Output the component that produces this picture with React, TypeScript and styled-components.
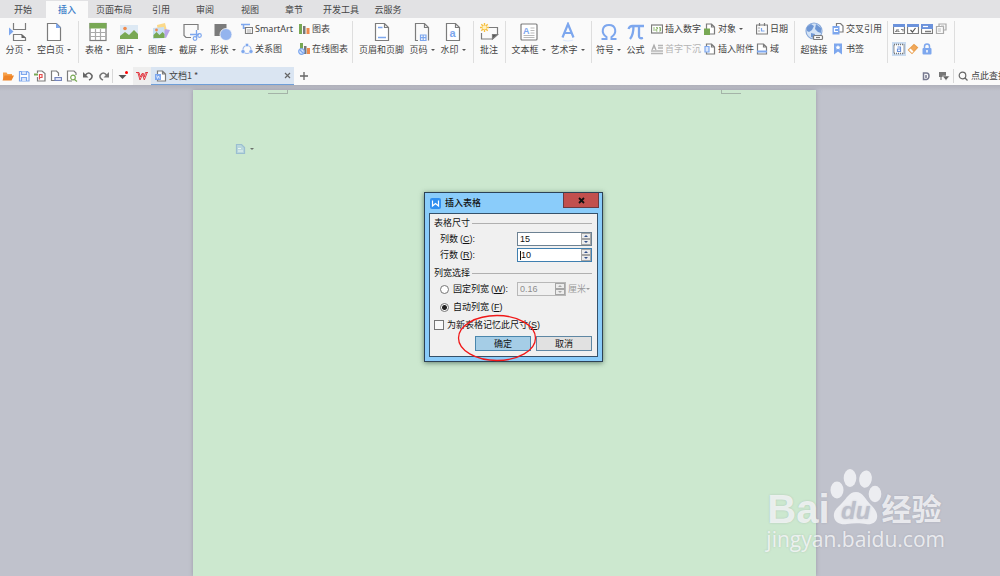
import React, { useState } from 'react';
import styled, { createGlobalStyle } from 'styled-components';

const GlobalStyle = createGlobalStyle`
  * { box-sizing: border-box; }
  body {
    margin: 0;
    background: #c0c2cc;
    color: #444;
    font-family: "Noto Sans CJK SC", sans-serif;
    font-size: 9px;
    line-height: 12px;
    overflow-x: hidden;
  }
  button, input, select {
    font: inherit;
    color: inherit;
    margin: 0;
    padding: 0;
    border: 0;
    background: none;
  }
  svg { flex: none; }
`;

const blue = '#7da7ee';
const gray = '#7c7c7c';
const green = '#78a854';
const orange = '#ef8a4c';

const Shell = styled.div`
  position: relative;
  min-height: 100vh;
  display: flex;
  flex-direction: column;
  overflow: hidden;
`;

const TabBar = styled.nav`
  display: flex;
  height: 18px;
  padding-top: 1px;
  background: #e2e2e4;
`;

const MenuTab = styled.button<{ $width: number; $active?: boolean }>`
  flex: none;
  width: ${(p) => p.$width}px;
  height: 17px;
  white-space: nowrap;
  color: ${(p) => (p.$active ? '#3f7fc9' : '#444')};
  font-weight: ${(p) => (p.$active ? 500 : 400)};
  background: ${(p) => (p.$active ? '#fafafa' : 'transparent')};
`;

const Ribbon = styled.div`
  display: flex;
  height: 49px;
  padding-left: 2px;
  background: #fafafa;
  overflow: hidden;
`;

const Divider = styled.div`
  flex: none;
  width: 1px;
  height: 42px;
  margin: 3px 3px 0 4px;
  background: #dedede;
`;

const LargeTool = styled.button<{ $width: number }>`
  flex: none;
  width: ${(p) => p.$width}px;
  height: 40px;
  padding-top: 4px;
  display: flex;
  flex-direction: column;
  align-items: center;
  gap: 2px;
  white-space: nowrap;
`;

const Label = styled.span`
  display: flex;
  align-items: center;
  gap: 3px;
  white-space: nowrap;
`;

const Arrow = styled.i`
  width: 0;
  height: 0;
  border: 2px solid transparent;
  border-top: 2px solid #555;
  border-bottom: 0;
`;

const ToolColumn = styled.div<{ $width: number }>`
  flex: none;
  width: ${(p) => p.$width}px;
  padding: 1px 0 0 2px;
  display: flex;
  flex-direction: column;
`;

const SmallTool = styled.button`
  height: 20px;
  display: flex;
  align-items: center;
  gap: 2px;
  white-space: nowrap;
  &:disabled { color: #b4b4b4; }
`;

const Latin = styled.span`
  font-family: "Noto Sans", sans-serif;
`;

const IconGrid = styled.div`
  flex: none;
  display: grid;
  grid-template-columns: repeat(4, 14px);
  grid-auto-rows: 20px;
  padding: 1px 2px 0 1px;
`;

const GridButton = styled.button<{ $on?: boolean }>`
  width: 14px;
  height: 14px;
  align-self: center;
  display: grid;
  place-items: center;
  background: ${(p) => (p.$on ? '#c9dbf0' : 'transparent')};
`;

const QuickBar = styled.div`
  display: flex;
  align-items: center;
  height: 18px;
  background: #fafafa;
`;

const QuickButton = styled.button<{ $width?: number; $shade?: boolean }>`
  flex: none;
  width: ${(p) => p.$width ?? 16}px;
  height: 18px;
  display: grid;
  place-items: center;
  background: ${(p) => (p.$shade ? '#eeeeee' : 'transparent')};
`;

const ThinRule = styled.div`
  flex: none;
  width: 1px;
  height: 14px;
  background: #d8d8d8;
`;

const DocTab = styled.div`
  flex: none;
  width: 143px;
  height: 18px;
  padding: 0 3px 0 4px;
  display: flex;
  align-items: center;
  gap: 2px;
  background: #dae5f2;
  border-bottom: 1px solid #6f9fd8;
`;

const DocTitle = styled.span`
  flex: 1;
`;

const QuickRight = styled.div`
  flex: none;
  margin-left: auto;
  display: flex;
  align-items: center;
`;

const SearchButton = styled.button`
  display: flex;
  align-items: center;
  justify-content: flex-start;
  gap: 3px;
  width: 46px;
  padding-left: 4px;
  white-space: nowrap;
  overflow: hidden;
`;

const Workspace = styled.main`
  flex: 1;
  display: flex;
  justify-content: center;
  padding: 5px 0 0 9px;
  background: linear-gradient(#b0b1bb, #c0c2cc 6px);
`;

const Paper = styled.article`
  position: relative;
  width: 623px;
  display: flex;
  flex-direction: column;
  background: #cce8cf;
  box-shadow: 0 0 4px #9a9ba8;
`;

const CropMarks = styled.div`
  display: flex;
  justify-content: space-between;
  padding: 0 75px;
`;

const CropMark = styled.i<{ $side: 'left' | 'right' }>`
  width: 20px;
  height: 4px;
  border-bottom: 1px solid #a4b3a8;
  border-${(p) => (p.$side === 'left' ? 'right' : 'left')}: 1px solid #a4b3a8;
`;

const PasteOptions = styled.button`
  align-self: flex-start;
  margin: 49px 0 0 42px;
  display: flex;
  align-items: center;
  gap: 4px;
  opacity: 0.8;
`;

const Dialog = styled.form`
  position: absolute;
  top: 102px;
  left: 231px;
  width: 179px;
  border: 1px solid #2c4256;
  background: #8accfa;
  box-shadow: 0 1px 5px rgba(30, 60, 50, 0.6);
  padding: 0 4px 4px;
  color: #111;
`;

const TitleBar = styled.header`
  display: flex;
  align-items: center;
  height: 20px;
  gap: 4px;
`;

const Title = styled.h1`
  flex: 1;
  margin: 0;
  font-size: 9px;
  font-weight: 500;
  line-height: 12px;
`;

const CloseButton = styled.button`
  align-self: flex-start;
  width: 36px;
  height: 15px;
  margin-right: -1px;
  background: #c2504e;
  border: 1px solid #6b3a42;
  border-top: 0;
  display: grid;
  place-items: center;
`;

const DialogBody = styled.div`
  border: 1px solid #35516a;
  background: #f0f0f0;
  padding: 3px 5px 5px 4px;
`;

const SectionTitle = styled.h2`
  display: flex;
  align-items: center;
  gap: 2px;
  margin: 0 0 2px;
  font-size: 9px;
  font-weight: 400;
  line-height: 12px;
  &::after {
    content: "";
    flex: 1;
    height: 1px;
    background: #b0b0b0;
  }
`;

const FieldGroup = styled.div`
  margin-bottom: 4px;
`;

const Field = styled.div<{ $indent?: boolean }>`
  display: flex;
  align-items: center;
  height: 16px;
  padding-left: ${(p) => (p.$indent ? 6 : 0)}px;
`;

const ChoiceRow = styled(Field)`
  margin-bottom: 2px;
`;

const FieldLabel = styled.label`
  flex: 1;
  white-space: nowrap;
`;

const Key = styled.span`
  font-family: "Liberation Sans", sans-serif;
`;

const Spin = styled.span<{ $width: number; $focus?: boolean; $off?: boolean }>`
  display: flex;
  width: ${(p) => p.$width}px;
  height: 14px;
  padding: 0 0 0 2px;
  align-items: center;
  background: ${(p) => (p.$off ? '#f0f0f0' : '#fff')};
  border: 1px solid ${(p) => (p.$off ? '#b8b8b8' : p.$focus ? '#3f7fb0' : '#6d8293')};
  color: ${(p) => (p.$off ? '#8e8e8e' : '#111')};
`;

const SpinInput = styled.input`
  flex: 1;
  min-width: 0;
  height: 12px;
  outline: none;
  font-family: "Liberation Sans", sans-serif;
  font-size: 9px;
  line-height: 12px;
`;

const TextCursor = styled.i`
  width: 1px;
  height: 9px;
  background: #111;
`;

const SpinButtons = styled.span<{ $off?: boolean }>`
  display: flex;
  flex-direction: column;
  width: 10px;
  height: 12px;
  color: ${(p) => (p.$off ? '#a8a8a8' : '#33508a')};
`;

const SpinButton = styled.button`
  flex: 1;
  display: grid;
  place-items: center;
  background: #ececec;
  border: 1px solid #a5a5a5;
`;

const UnitSelect = styled.select`
  appearance: none;
  width: 18px;
  margin-left: 2px;
  color: #9a9a9a;
  opacity: 1;
`;

const UnitArrow = styled(Arrow)`
  border-top-color: #9a9a9a;
  margin-right: 2px;
`;

const Radio = styled.input`
  appearance: none;
  width: 9px;
  height: 9px;
  margin: 0 4px 0 0;
  border: 1px solid #767676;
  border-radius: 50%;
  background: #fff;
  &:checked { background: radial-gradient(circle, #222 0 2px, #fff 3px); }
`;

const Check = styled.input`
  appearance: none;
  width: 10px;
  height: 10px;
  margin: 0 3px 0 0;
  border: 1px solid #767676;
  background: #fafafa;
  &:checked { background: #4b7fb8; }
`;

const Actions = styled.div`
  display: flex;
  justify-content: flex-end;
  gap: 5px;
  padding-top: 1px;
`;

const ActionButton = styled.button<{ $primary?: boolean }>`
  width: 56px;
  height: 15px;
  line-height: 12px;
  color: #111;
  background: ${(p) => (p.$primary ? '#a5cde6' : '#e1e1e1')};
  border: 1px solid ${(p) => (p.$primary ? '#4a86ac' : '#5f87a3')};
`;

const Highlight = styled.svg`
  position: absolute;
  left: 32px;
  top: 121px;
  pointer-events: none;
`;

const Watermark = styled.footer`
  position: absolute;
  right: 55px;
  bottom: 24px;
  color: rgba(250, 250, 252, 0.8);
  text-shadow: 0 0 2px rgba(110, 115, 130, 0.3);
  pointer-events: none;
`;

const WatermarkRow = styled.div`
  display: flex;
  align-items: flex-end;
  padding-left: 1px;
`;

const Brand = styled.span`
  font: 700 40px/34px "Liberation Sans", sans-serif;
`;

const BrandCn = styled.span`
  font: 700 30px/32px "Liberation Sans", "Noto Sans CJK SC", sans-serif;
`;

const Site = styled.div`
  font: 400 21px/26px "Open Sans", sans-serif;
`;

type IconProps = { w?: number; h?: number; children: React.ReactNode };

const Icon = ({ w = 20, h = 20, children }: IconProps) => (
  <svg width={w} height={h} viewBox={`0 0 ${w} ${h}`} fill="none" stroke={gray} strokeWidth="1.2" aria-hidden="true">
    {children}
  </svg>
);

const Small = ({ children }: { children: React.ReactNode }) => <Icon w={12} h={12}>{children}</Icon>;

const sheet = 'M3.500 1.500h9l4 4v13h-13zM12.500 1.500v4h4';
const miniSheet = 'M2.500 1h5l3 3v7h-8zM7.500 1v3h3';

const icons = {
  pageBreak: <Icon><path d="M5.500 1v6.500h12V1M5.500 19v-6.500h8l4 3.500v2.500h-12" /><path d="M13.500 12l4.500 4h-4.500z" fill="#666" stroke="none" /><path d="M1 5.500l4.500 4L1 13.500z" fill={blue} stroke="none" /></Icon>,
  blankPage: <Icon><path d="M3.500 1.500h9l4 4v13h-13z" fill="#fff" /><path d="M12 1l5 5h-5z" fill={blue} stroke="none" /></Icon>,
  table: <Icon><rect x="2" y="1.500" width="16" height="17" fill="#fff" /><path d="M2 10.500h16M2 14.500h16M7.500 7v11M12.500 7v11" stroke="#aaa" /><path d="M1.500 1h17v5.500h-17z" fill={green} stroke="none" /></Icon>,
  picture: <Icon><path d="M1 3h18v14H1z" fill="#dde9f4" stroke="none" /><path d="M1 17v-3l5-4 4 3 5-5 4 4v5z" fill={green} stroke="none" /><circle cx="6" cy="6.500" r="1.800" fill={orange} stroke="none" /></Icon>,
  gallery: <Icon><path d="M6 3l8-2 2 8-9 1z" fill="#fbd98a" stroke="none" /><path d="M14 7l5 1-4 8-4-1z" fill="#b9a7e8" stroke="none" /><path d="M2 6l11-1 1 11-12 1z" fill="#c9e0f4" stroke="none" /><path d="M2.500 16v-3l3-3 3 3 3-3 2 2v4z" fill={green} stroke="none" /><circle cx="5.500" cy="8" r="1.400" fill={orange} stroke="none" /></Icon>,
  screenshot: <Icon><path d="M9 15.500H4l-2-2V2.500h14V8" /><path d="M14.500 8v8M8 12.500h9" stroke={blue} strokeWidth="1.300" /><circle cx="13" cy="16.500" r="1.800" stroke={blue} /><circle cx="17.500" cy="13.500" r="1.800" stroke={blue} /></Icon>,
  shapes: <Icon><path d="M1.500 2h12v12h-12z" fill="#7b7b7b" stroke="none" /><circle cx="13" cy="12.500" r="6" fill="#94b4ee" stroke="#fafafa" strokeWidth=".8" /></Icon>,
  smartArt: <Small><path d="M0 1.500h9M2 5h3M2.500 2v4" stroke={blue} strokeWidth="1.500" /><path d="M4.500 4.500h7v6h-7z" fill="#fff" /><path d="M6 7h4M6 9h4" stroke="#aaa" /></Small>,
  relation: <Small><circle cx="6" cy="6.500" r="4" stroke="#9bb8ee" /><circle cx="6" cy="2" r="1.700" fill={blue} stroke="#fafafa" strokeWidth=".5" /><circle cx="2" cy="8.500" r="2" fill={blue} stroke="#fafafa" strokeWidth=".5" /><circle cx="10" cy="8.500" r="2" fill={blue} stroke="#fafafa" strokeWidth=".5" /></Small>,
  chart: <Small><path d="M1 1h3v10H1z" fill={green} stroke="none" /><path d="M5 3h2.500v8H5z" fill="#777" stroke="none" /><path d="M8.500 5h3v6h-3z" fill={orange} stroke="none" /></Small>,
  onlineChart: <Small><path d="M2 0h3v7H2z" fill={green} stroke="none" /><path d="M6 3h2.500v8H6z" fill="#777" stroke="none" /><path d="M9 5h3v6H9z" fill={orange} stroke="none" /><circle cx="3.500" cy="8.500" r="2.800" fill="#dbe8fc" stroke={blue} /><path d="M2 7l3 3" stroke={blue} /></Small>,
  headerFooter: <Icon><path d={sheet} fill="#fff" /><path d="M6 5.500h4.500M6 15.500h8" stroke={blue} strokeWidth="1.500" /></Icon>,
  pageNumber: <Icon><path d="M6 18.500H3.500v-17h9l4 4V18.500M12.500 1.500v4h4" /><path d="M8.500 13h5.500v5.500H8.500zM11.200 13v5.500M8.500 15.700H14" stroke={blue} /></Icon>,
  watermark: <Icon><path d={sheet} fill="#fff" /><text x="6.500" y="15" fontSize="11" fontWeight="700" fill={blue} stroke="none" fontFamily="Liberation Sans">a</text></Icon>,
  comment: <Icon><path d="M9 5.500h9.500v7l-5 4.500H2.500v-6" /><path d="M18.500 12.500h-5V17z" fill="#555" /><path d="M5.500 1v9M1 5.500h9M2.300 2.300l6.400 6.400M8.700 2.300L2.300 8.700" stroke="#f6bf3e" strokeWidth="1.400" /><circle cx="5.500" cy="5.500" r="2" fill="#fff1bd" stroke="none" /></Icon>,
  textBox: <Icon><rect x="2" y="2" width="16" height="16" rx="1" fill="#fff" /><text x="4" y="11.500" fontSize="9" fontWeight="700" fill={blue} stroke="none" fontFamily="Liberation Sans">A</text><path d="M11.500 6h4M11.500 8.500h4M11.500 11h4M4.500 13.500h11M4.500 15.500h11" stroke="#bbb" /></Icon>,
  wordArt: <Icon><path d="M4.500 15.500L10 2l5.500 13.500M6.500 11h7" stroke={blue} strokeWidth="2.200" /><path d="M5 18q5 2 10 0" stroke="#dce7fa" /></Icon>,
  omega: <Icon><path d="M2.500 17h5v-2C1.500 11 3 3 10 3s8.500 8 2.500 12v2h5" stroke={blue} strokeWidth="2" /></Icon>,
  pi: <Icon><path d="M2.500 7q1-3 4-3h11.500M7.500 4q0 9-3.500 13M13 4v10q0 3 4 2" stroke={blue} strokeWidth="2.300" /></Icon>,
  number: <Small><rect x=".5" y="2" width="11" height="8" fill="#fff" /><path d="M3 4v4M5 4.500h1.500v1.500H5v2h1.500M8 4.500h1.500V8H8M8 6h1.500" stroke={green} strokeWidth=".8" /></Small>,
  dropCap: <Small><path d="M1 7l2-5 2 5M2 5h2" stroke="#aaa" /><path d="M7 2.500h5M7 5h5M0 8h12M0 10.500h12" stroke="#b5b5b5" strokeWidth="1.500" /></Small>,
  object: <Small><path d={miniSheet} fill="#fff" /><path d="M0 5.500h6V12H0z" fill={green} stroke="none" /></Small>,
  attachment: <Small><path d={miniSheet} fill="#fff" /><path d="M1 3.500h4v5.500H1z" fill="#dbe7fb" stroke={blue} /></Small>,
  date: <Small><path d="M.5 2h11v9H.5zM3.500 0v3M8.500 0v3" /><path d="M5.500 5v3h3" stroke={blue} /><path d="M2 5h2M2 8h2" stroke="#aaa" /></Small>,
  fieldCode: <Small><path d="M1.500 1h6l3 3v7h-9zM7.500 1v3h3" fill="#fff" /><path d="M1 8.500h10" stroke={blue} strokeWidth="2" /></Small>,
  hyperlink: <Icon><circle cx="10" cy="9" r="8" fill="#d5e4f6" stroke="#8aaada" /><path d="M3 5l4-3 3 2-2 4-3 2-2-1zM12 2l5 4v5l-3-1-3-3zM7 11l4 1-1 4-3-1z" fill="#6f97d4" stroke="none" /><rect x="9.500" y="13.500" width="9" height="4" rx="1" fill="#fafafa" /><path d="M12 15.500h4" /></Icon>,
  crossRef: <Small><path d="M4.500.500h4l2.500 2.500v6H4.500z" fill="#fff" /><path d="M.5 3h7v8.500h-7z" fill={blue} stroke="none" /><path d="M6 5.500H2.500v3H6" stroke="#fff" /></Small>,
  bookmark: <Small><path d="M2 .5h8v11L6 8.500l-4 3z" fill={blue} stroke="none" /><path d="M6 2l.8 1.500 1.700.2-1.200 1.200.3 1.600L6 5.700 4.400 6.500l.3-1.600-1.200-1.200L5.200 3.500z" fill="#fff" stroke="none" /></Small>,
  textField: <Small><path d="M.5 1.500h11v9H.5z" fill="#fff" /><path d="M0 1h12v3H0z" fill="#6c93dc" stroke="none" /><path d="M2 8.500h1.500v-2M5 6v2.500h1.500M8 6.500h2v2" stroke="#888" /></Small>,
  checkField: <Small><path d="M.5 1.500h11v9H.5z" fill="#fff" /><path d="M0 1h12v3H0z" fill="#6c93dc" stroke="none" /><path d="M3.500 7l2 2 3-4" stroke="#555" /></Small>,
  comboField: <Small><path d="M.5 1.500h11v9H.5z" fill="#fff" /><path d="M0 1h12v5H0z" fill="#6c93dc" stroke="none" /><path d="M2 3.500h5" stroke="#fff" /><path d="M4 8.500h6" strokeWidth="1.500" /></Small>,
  props: <Small><path d="M1.500 3.500h7v7h-7z M4 3V1h7v6H9" stroke="#aaa" /><path d="M3 6h3M3 8h3M6 3h3" stroke="#bbb" /></Small>,
  shading: <Small><path d="M1 1.500h10v9H1z" fill="#fff" stroke="#777" strokeDasharray="1 1" strokeWidth="1.500" /><path d="M4.500 4h3v4.500h-3V6h3" stroke="#6c93dc" /></Small>,
  eraser: <Small><path d="M1.500 7L7 1.500l3.500 3L5 10.500z" fill="#f2a95a" stroke="#e9a050" /><path d="M3.500 5.500l3 3L5 10 2 7z" fill="#fff" stroke="none" /></Small>,
  lock: <Small><path d="M3.500 6V3.500q0-2.500 2.500-2.500t2.500 2.500V6" stroke={blue} strokeWidth="1.500" /><rect x="1.500" y="5" width="9" height="6.500" rx="1" fill={blue} stroke="none" /><path d="M6 7v2.500" stroke="#fff" strokeWidth="1.500" /></Small>,
  open: <Small><path d="M1 10V2.500h3.500l1 1.500H10v2" fill="#f7a14b" stroke="none" /><path d="M.5 10.500L2.500 5.500h9.500l-2.500 5z" fill="#ee8428" stroke="none" /></Small>,
  save: <Small><path d="M1.500 1.500h8l1.500 1.500v8H1.500z" fill="#fff" stroke={blue} /><path d="M3.500 1.500v3h5v-3M3.500 11V7.500h5V11" stroke={blue} fill="#dbe7fb" /></Small>,
  pdf: <Small><path d="M3.500 3V1H8l3 2.500V11H3.500V7" fill="#fff" /><path d="M5.500 9.500v-5h2.500v3H5.500" stroke="#e54d4d" /><path d="M0 4.500h4" stroke={green} strokeWidth="2" /></Small>,
  print: <Small><path d="M8.500 6V3L6.500 1h-5v9.500H5" fill="#fff" /><path d="M5 7.500h6.500v3H5z" stroke="#7484bd" fill="#dce1f4" /></Small>,
  preview: <Small><path d="M10 5V3L8 1H1.500v10H6" fill="#fff" /><circle cx="7" cy="7.500" r="2.300" stroke={green} /><path d="M8.500 9.500l2.500 2" stroke={green} /></Small>,
  undo: <Small><path d="M3 5.500q4-5 7 0 .5 3-3 4.500" stroke="#666" strokeWidth="1.600" /><path d="M1 2v5.500h5.500z" fill="#666" stroke="none" /></Small>,
  redo: <Small><path d="M9 5.500q-4-5-7 0-.5 3 3 4.500" stroke="#777" strokeWidth="1.600" /><path d="M11 2v5.500H5.500z" fill="#777" stroke="none" /></Small>,
  more: <Small><path d="M1.500 5h8l-4 4z" fill="#555" stroke="none" /><circle cx="9.500" cy="2.500" r="1.500" fill="#f00" stroke="none" /></Small>,
  wps: <Small><path d="M0 2.500h3L4.300 7 6 3.500h1.500L8.200 7l1.300-4.500h2.500M2 3l2 7 2.500-5.500L8.300 10 11 3" stroke="#e33b45" strokeWidth="1" /></Small>,
  doc: <Small><path d={miniSheet} fill="#fff" /><path d="M0 4h6v6H0z" fill={blue} stroke="none" /><path d="M1.500 5.500L2.500 8.500 3.500 6l1 2.500" stroke="#fff" strokeWidth=".7" /></Small>,
  plus: <Small><path d="M6 2v8M2 6h8" stroke="#666" strokeWidth="1.300" /></Small>,
  skin: <Small><path d="M3.500 3h3q2.500 0 2.500 3T6.500 9.500h-3zM6 5v3" stroke="#777a90" strokeWidth="1.500" /></Small>,
  panel: <Small><path d="M1 2h7v5H1z" fill="#777" stroke="none" /><path d="M3 7v3" /><path d="M4.500 6h7L8 10.500z" fill="#666" stroke="#fafafa" strokeWidth=".5" /></Small>,
  search: <Icon w={10} h={10}><circle cx="4.500" cy="4.500" r="3.300" stroke="#666" /><path d="M7 7l2.500 2.500" stroke="#666" /></Icon>,
  close: <Icon w={7} h={7}><path d="M1 1l5 5M6 1L1 6" stroke="#666" /></Icon>,
};

type IconName = keyof typeof icons;

const tabs: [string, number][] = [
  ['开始', 46], ['插入', 42], ['页面布局', 52], ['引用', 42], ['审阅', 46],
  ['视图', 44], ['章节', 44], ['开发工具', 50], ['云服务', 44],
];

const Tool = ({ icon, text, width, menu }: { icon: IconName; text: string; width: number; menu?: boolean }) => (
  <LargeTool type="button" $width={width}>
    {icons[icon]}
    <Label>{text}{menu && <Arrow />}</Label>
  </LargeTool>
);

type RowTool = { icon: IconName; text: string; menu?: boolean; disabled?: boolean; latin?: boolean };

const Column = ({ width, rows }: { width: number; rows: RowTool[] }) => (
  <ToolColumn $width={width}>
    {rows.map((r) => (
      <SmallTool type="button" key={r.text} disabled={r.disabled}>
        {icons[r.icon]}
        <Label>{r.latin ? <Latin>{r.text}</Latin> : r.text}{r.menu && <Arrow />}</Label>
      </SmallTool>
    ))}
  </ToolColumn>
);

const gridTools: [IconName, string][] = [
  ['textField', '文字型窗体域'], ['checkField', '复选框型窗体域'], ['comboField', '下拉型窗体域'], ['props', '窗体域选项'],
  ['shading', '窗体域底纹'], ['eraser', '重新设置窗体域'], ['lock', '保护窗体'],
];

const quickTools: [IconName, string][] = [
  ['open', '打开'], ['save', '保存'], ['pdf', '输出为PDF'], ['print', '打印'],
  ['preview', '打印预览'], ['undo', '撤销'], ['redo', '恢复'],
];

const Hot = ({ k, colon }: { k: string; colon?: boolean }) => (
  <Key>(<u>{k}</u>){colon && ':'}</Key>
);

type SpinProps = { id: string; value: string; width: number; name?: string; focus?: boolean; off?: boolean; onChange?: (v: string) => void };

const Spinner = ({ id, value, width, name, focus, off, onChange }: SpinProps) => {
  const step = (n: number) => onChange?.(String(Math.max(1, Number(value) + n)));
  return (
    <Spin $width={width} $focus={focus} $off={off}>
      {focus && <TextCursor />}
      <SpinInput id={id} aria-label={name} value={value} disabled={off} onChange={(e) => onChange?.(e.target.value)} />
      <SpinButtons $off={off}>
        <SpinButton type="button" aria-label="增加" disabled={off} onClick={() => step(1)}>
          <svg width="4" height="2"><path d="M0 2L2 0l2 2z" fill="currentColor" /></svg>
        </SpinButton>
        <SpinButton type="button" aria-label="减少" disabled={off} onClick={() => step(-1)}>
          <svg width="4" height="2"><path d="M0 0l2 2 2-2z" fill="currentColor" /></svg>
        </SpinButton>
      </SpinButtons>
    </Spin>
  );
};

const InsertTableDialog = () => {
  const [cols, setCols] = useState('15');
  const [rows, setRows] = useState('10');
  const [mode, setMode] = useState('auto');
  return (
    <Dialog role="dialog" aria-labelledby="dialog-title" onSubmit={(e) => e.preventDefault()}>
      <TitleBar>
        <Icon w={12} h={12}>
          <rect x="1" y="1" width="11" height="11" rx="2" fill="#2f8ff0" stroke="none" />
          <path d="M3.500 3.500v5.500l3-2.500 3 2.500v-5.500" stroke="#fff" />
        </Icon>
        <Title id="dialog-title">插入表格</Title>
        <CloseButton type="button" aria-label="关闭">
          <svg width="7" height="7" aria-hidden="true"><path d="M1 1l5 5M6 1L1 6" stroke="#111" strokeWidth="1.800" /></svg>
        </CloseButton>
      </TitleBar>
      <DialogBody>
        <SectionTitle>表格尺寸</SectionTitle>
        <FieldGroup>
          <Field $indent>
            <FieldLabel htmlFor="cols">列数 <Hot k="C" colon /></FieldLabel>
            <Spinner id="cols" value={cols} width={75} onChange={setCols} />
          </Field>
          <Field $indent>
            <FieldLabel htmlFor="rows">行数 <Hot k="R" colon /></FieldLabel>
            <Spinner id="rows" value={rows} width={75} focus onChange={setRows} />
          </Field>
        </FieldGroup>
        <SectionTitle>列宽选择</SectionTitle>
        <ChoiceRow $indent>
          <Radio type="radio" name="mode" id="fixed" checked={mode === 'fixed'} onChange={() => setMode('fixed')} />
          <FieldLabel htmlFor="fixed">固定列宽 <Hot k="W" colon /></FieldLabel>
          <Spinner id="width" name="固定列宽值" value="0.16" width={49} off />
          <UnitSelect aria-label="单位" disabled><option>厘米</option></UnitSelect>
          <UnitArrow />
        </ChoiceRow>
        <ChoiceRow $indent>
          <Radio type="radio" name="mode" id="auto" checked={mode === 'auto'} onChange={() => setMode('auto')} />
          <FieldLabel htmlFor="auto">自动列宽 <Hot k="F" /></FieldLabel>
        </ChoiceRow>
        <ChoiceRow>
          <Check type="checkbox" id="remember" />
          <FieldLabel htmlFor="remember">为新表格记忆此尺寸<Hot k="S" /></FieldLabel>
        </ChoiceRow>
        <Actions>
          <ActionButton type="submit" $primary>确定</ActionButton>
          <ActionButton type="button">取消</ActionButton>
        </Actions>
      </DialogBody>
      <Highlight width="80" height="48" aria-hidden="true">
        <ellipse cx="40" cy="24" rx="38.500" ry="22.500" fill="none" stroke="#f01818" strokeWidth="1.300" />
      </Highlight>
    </Dialog>
  );
};

export default function App() {
  return (
    <Shell>
      <GlobalStyle />
      <TabBar>
        {tabs.map(([name, width]) => (
          <MenuTab type="button" key={name} $width={width} $active={name === '插入'}>{name}</MenuTab>
        ))}
      </TabBar>
      <Ribbon>
        <Tool icon="pageBreak" text="分页" width={32} menu />
        <Tool icon="blankPage" text="空白页" width={40} menu />
        <Divider />
        <Tool icon="table" text="表格" width={31} menu />
        <Tool icon="picture" text="图片" width={32} menu />
        <Tool icon="gallery" text="图库" width={31} menu />
        <Tool icon="screenshot" text="截屏" width={31} menu />
        <Tool icon="shapes" text="形状" width={32} menu />
        <Column width={57} rows={[{ icon: 'smartArt', text: 'SmartArt', latin: true }, { icon: 'relation', text: '关系图' }]} />
        <Column width={52} rows={[{ icon: 'chart', text: '图表' }, { icon: 'onlineChart', text: '在线图表' }]} />
        <Divider />
        <Tool icon="headerFooter" text="页眉和页脚" width={51} />
        <Tool icon="pageNumber" text="页码" width={30} menu />
        <Tool icon="watermark" text="水印" width={32} menu />
        <Divider />
        <Tool icon="comment" text="批注" width={24} />
        <Divider />
        <Tool icon="textBox" text="文本框" width={39} menu />
        <Tool icon="wordArt" text="艺术字" width={39} menu />
        <Divider />
        <Tool icon="omega" text="符号" width={27} menu />
        <Tool icon="pi" text="公式" width={27} />
        <Column width={53} rows={[{ icon: 'number', text: '插入数字' }, { icon: 'dropCap', text: '首字下沉', disabled: true }]} />
        <Column width={52} rows={[{ icon: 'object', text: '对象', menu: true }, { icon: 'attachment', text: '插入附件' }]} />
        <Column width={36} rows={[{ icon: 'date', text: '日期' }, { icon: 'fieldCode', text: '域' }]} />
        <Divider />
        <Tool icon="hyperlink" text="超链接" width={32} />
        <Column width={53} rows={[{ icon: 'crossRef', text: '交叉引用' }, { icon: 'bookmark', text: '书签' }]} />
        <Divider />
        <IconGrid>
          {gridTools.map(([icon, name]) => (
            <GridButton type="button" key={name} aria-label={name} $on={icon === 'shading'}>{icons[icon]}</GridButton>
          ))}
        </IconGrid>
        <Divider />
      </Ribbon>
      <QuickBar>
        {quickTools.map(([icon, name]) => (
          <QuickButton type="button" key={name} aria-label={name}>{icons[icon]}</QuickButton>
        ))}
        <ThinRule />
        <QuickButton type="button" aria-label="自定义快速访问工具栏" $width={20}>{icons.more}</QuickButton>
        <QuickButton type="button" aria-label="首页" $width={18} $shade>{icons.wps}</QuickButton>
        <DocTab>
          {icons.doc}
          <DocTitle>文档1 *</DocTitle>
          <QuickButton type="button" aria-label="关闭文档" $width={8}>{icons.close}</QuickButton>
        </DocTab>
        <QuickButton type="button" aria-label="新建" $width={20}>{icons.plus}</QuickButton>
        <QuickRight>
          <QuickButton type="button" aria-label="皮肤" $width={18}>{icons.skin}</QuickButton>
          <QuickButton type="button" aria-label="窗格" $width={18}>{icons.panel}</QuickButton>
          <ThinRule />
          <SearchButton type="button">{icons.search}点此查找</SearchButton>
        </QuickRight>
      </QuickBar>
      <Workspace>
        <Paper>
          <CropMarks><CropMark $side="left" /><CropMark $side="right" /></CropMarks>
          <PasteOptions type="button" aria-label="粘贴选项">
            <Icon w={11} h={12}>
              <path d="M1.500 1.500h5l3 3v6h-8z" fill="#b4d3df" stroke="#8fb4d2" />
              <path d="M3 5.500h3M3 8h5" stroke="#f2fafc" />
            </Icon>
            <Arrow />
          </PasteOptions>
          <InsertTableDialog />
        </Paper>
      </Workspace>
      <Watermark>
        <WatermarkRow>
          <Brand>Bai</Brand>
          <svg width="52" height="58" viewBox="0 0 52 58" aria-hidden="true">
            <g fill="#ecedf1">
              <ellipse cx="7" cy="22" rx="6.500" ry="8.500" />
              <ellipse cx="20" cy="10" rx="6.300" ry="9" />
              <ellipse cx="35.500" cy="11" rx="6.300" ry="8.700" transform="rotate(10 35 11)" />
              <ellipse cx="45" cy="26" rx="6.300" ry="8.300" />
              <path d="M26 24c7 0 9 7 14 12s8 9 7 14-6 7-11 6-13-1-19 0-12-1-13-7 3-9 8-14 7-11 14-11z" />
            </g>
            <text x="11" y="51" fontFamily="Liberation Sans" fontWeight="700" fontStyle="italic" fontSize="24" fill="#bdc0cb">du</text>
          </svg>
          <BrandCn>经验</BrandCn>
        </WatermarkRow>
        <Site>jingyan.baidu.com</Site>
      </Watermark>
    </Shell>
  );
}
